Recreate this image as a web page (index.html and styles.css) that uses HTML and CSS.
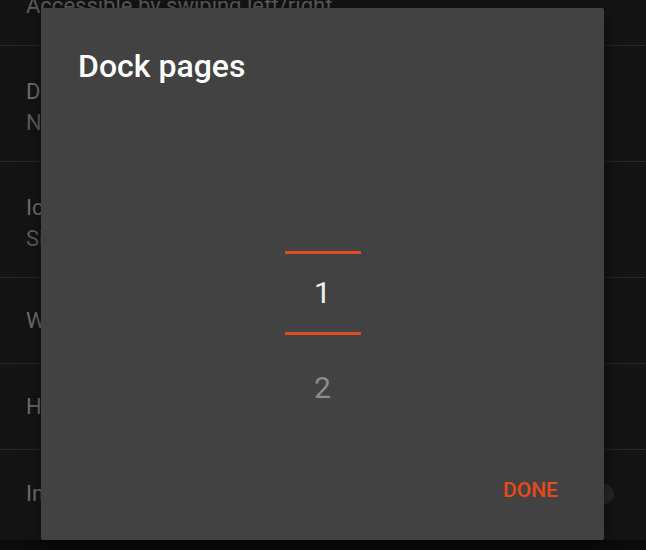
FILE: index.html
```html
<!DOCTYPE html>
<html lang="en">
<head>
    <meta charset="UTF-8">
    <meta name="viewport" content="width=device-width, initial-scale=1.0">
    <title>Dock pages</title>
    <link rel="stylesheet" href="styles.css">
</head>
<body>

    <div class="screen">
        <!-- Settings list behind the dialog -->
        <div class="settings">
            <div class="row row-cut">
                <span class="summary">Accessible by swiping left/right</span>
            </div>
            <div class="row row-tall">
                <span class="title">Dock background</span>
                <span class="summary">None</span>
            </div>
            <div class="row row-tall">
                <span class="title">Icon layout</span>
                <span class="summary">Size 100%</span>
            </div>
            <div class="row">
                <span class="title">Width padding</span>
            </div>
            <div class="row">
                <span class="title">Height padding</span>
            </div>
            <div class="row row-last">
                <span class="title">Infinite scroll</span>
                <span class="switch"></span>
            </div>
        </div>
        <div class="navbar"></div>

        <!-- Dialog -->
        <div class="dialog">
            <h2 class="dialog-title">Dock pages</h2>

            <div class="picker">
                <div class="picker-item"></div>
                <div class="picker-item selected">1</div>
                <div class="picker-item faded">2</div>
            </div>

            <div class="dialog-actions">
                <button class="btn-done">DONE</button>
            </div>
        </div>
    </div>

</body>
</html>
```

FILE: styles.css
```css
* {
    box-sizing: border-box;
}

body {
    margin: 0;
    font-family: Roboto, "Noto Sans", sans-serif;
    background: #141414;
    overflow: hidden;
}

.screen {
    position: relative;
    width: 646px;
    height: 550px;
}

.settings {
    height: 540px;
    overflow: hidden;
}

.row {
    display: flex;
    flex-direction: column;
    justify-content: center;
    height: 86px;
    padding: 0 26px;
    border-bottom: 1px solid #262626;
    font-size: 22px;
    line-height: 31px;
    position: relative;
}

.row-cut {
    height: 46px;
    justify-content: flex-start;
}

.row-cut .summary {
    margin-top: -10px;
}

.row-tall {
    height: 116px;
    padding-top: 6px;
}

.row-last {
    border-bottom: none;
}

.title {
    color: #6e6e6e;
}

.summary {
    color: #5c5c5c;
}

.switch {
    position: absolute;
    right: 32px;
    top: 34px;
    width: 20px;
    height: 20px;
    border-radius: 50%;
    background: #262626;
}

.navbar {
    height: 10px;
    background: #0b0b0b;
}

.dialog {
    position: absolute;
    left: 41px;
    top: 8px;
    width: 563px;
    height: 532px;
    background: #424242;
    border-radius: 2px;
    box-shadow: 0 4px 16px rgba(0, 0, 0, 0.5);
    display: flex;
    flex-direction: column;
}

.dialog-title {
    margin: 0;
    padding: 39px 0 0 37px;
    font-size: 32px;
    line-height: 38px;
    font-weight: 500;
    color: #ffffff;
}

.picker {
    margin-top: 65px;
    display: flex;
    flex-direction: column;
    align-items: center;
}

.picker-item {
    position: relative;
    width: 76px;
    height: 95px;
    display: flex;
    align-items: center;
    justify-content: center;
    font-size: 30px;
    color: #f2f2f2;
}

.picker-item.selected::before,
.picker-item.selected::after {
    content: "";
    position: absolute;
    left: 0;
    right: 0;
    height: 3px;
    background: #de4b1e;
}

.picker-item.selected::before {
    top: 6px;
}

.picker-item.selected::after {
    bottom: 5px;
}

.picker-item.faded {
    color: #8c8c8c;
}

.dialog-actions {
    margin-top: auto;
    display: flex;
    justify-content: flex-end;
    padding: 0 46px 38px 0;
}

.btn-done {
    background: none;
    border: none;
    padding: 0;
    font-family: Roboto, "Noto Sans", sans-serif;
    font-size: 21px;
    line-height: 24px;
    font-weight: 500;
    color: #e64a19;
    cursor: pointer;
}
```
